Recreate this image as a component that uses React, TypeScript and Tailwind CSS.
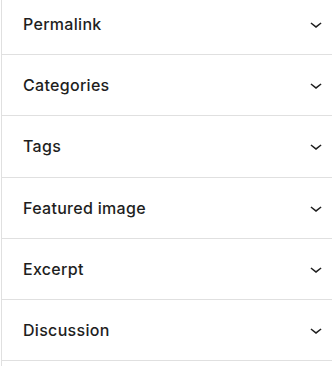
const panels = ['Permalink', 'Categories', 'Tags', 'Featured image', 'Excerpt', 'Discussion']

function Chevron() {
  return (
    <svg viewBox="0 0 24 24" width="24" height="24" className="shrink-0 fill-[#1e1e1e]" aria-hidden>
      <path d="M17.5 11.6L12 16l-5.5-4.4.9-1.2L12 14l4.6-3.6 1 1.2z" />
    </svg>
  )
}

export default function App() {
  return (
    <div className="h-[366px] w-[332px] overflow-hidden bg-white font-['Inter',sans-serif]">
      <div className="ml-px -mt-[6px] border-l border-[#e0e0e0]">
        {panels.map((title) => (
          <div
            key={title}
            className="flex h-[61.2px] items-center justify-between border-b border-[#e0e0e0] pl-[21px] pr-[4px]"
          >
            <span className="text-[16px] font-medium tracking-[0.3px] text-[#1e1e1e]">{title}</span>
            <Chevron />
          </div>
        ))}
        <div className="h-[61px]" />
      </div>
    </div>
  )
}
